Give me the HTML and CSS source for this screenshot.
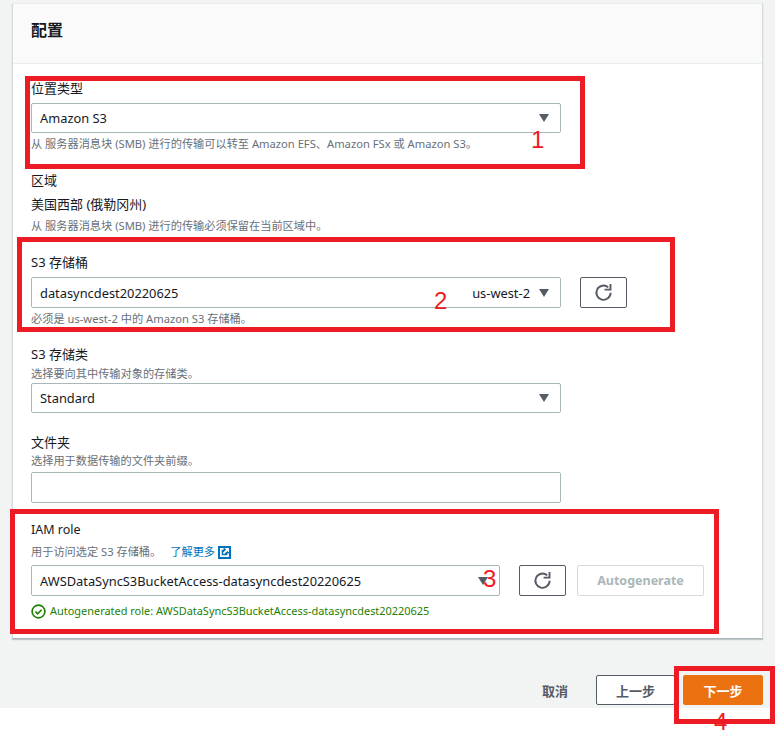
FILE: index.html
```html
<!DOCTYPE html>
<html lang="zh-CN">
<head>
<meta charset="utf-8">
<title>配置</title>
<link rel="stylesheet" href="styles.css">
</head>
<body>
<div class="page">
  <main class="wizard">
    <section class="card">
      <header class="card-header"><h2>配置</h2></header>
      <div class="card-body">
        <div class="field f-location">
          <div class="label">位置类型</div>
          <div class="select"><span class="value">Amazon S3</span><span class="caret"></span></div>
          <div class="hint">从 服务器消息块 (SMB) 进行的传输可以转至 Amazon EFS、Amazon FSx 或 Amazon S3。</div>
        </div>
        <div class="field f-region">
          <div class="label">区域</div>
          <div class="static">美国西部 (俄勒冈州)</div>
          <div class="hint">从 服务器消息块 (SMB) 进行的传输必须保留在当前区域中。</div>
        </div>
        <div class="field f-bucket">
          <div class="label">S3 存储桶</div>
          <div class="control-row">
            <div class="select"><span class="value">datasyncdest20220625</span><span class="tag">us-west-2</span><span class="caret"></span></div>
            <button class="btn icon-btn" type="button" aria-label="刷新"><svg viewBox="0 0 16 16" width="19" height="19"><path d="M14 8.2a6 6 0 1 1-2-4.5" class="ref"/><path d="M8.9 5.6h5V.8" class="ref"/></svg></button>
          </div>
          <div class="hint">必须是 us-west-2 中的 Amazon S3 存储桶。</div>
        </div>
        <div class="field f-class">
          <div class="label">S3 存储类</div>
          <div class="hint hint-top">选择要向其中传输对象的存储类。</div>
          <div class="select"><span class="value">Standard</span><span class="caret"></span></div>
        </div>
        <div class="field f-folder">
          <div class="label">文件夹</div>
          <div class="hint hint-top">选择用于数据传输的文件夹前缀。</div>
          <div class="select"></div>
        </div>
        <div class="field f-role">
          <div class="label">IAM role</div>
          <div class="hint hint-role">用于访问选定 S3 存储桶。<a class="link" href="#">了解更多<svg class="ext" viewBox="0 0 13 13" width="13" height="13"><path d="M0 0h13v13H0z" fill="#0073bb"/><path d="M2 2h3.6v1.7H3.7v5.6h5.6V7.4H11V11H2z" fill="#fff"/><path d="M6.5 2H11v4.5L9.4 4.9 6 8.2 4.8 7l3.3-3.4z" fill="#fff"/></svg></a></div>
          <div class="control-row role-row">
            <div class="select role-select"><span class="value">AWSDataSyncS3BucketAccess-datasyncdest20220625</span><span class="caret"></span></div>
            <button class="btn icon-btn" type="button" aria-label="刷新"><svg viewBox="0 0 16 16" width="19" height="19"><path d="M14 8.2a6 6 0 1 1-2-4.5" class="ref"/><path d="M8.9 5.6h5V.8" class="ref"/></svg></button>
            <button class="btn disabled" type="button">Autogenerate</button>
          </div>
          <div class="status"><svg viewBox="0 0 16 16" width="15" height="15"><circle cx="8" cy="8" r="6.8" fill="none" stroke="#1d8102" stroke-width="1.8"/><path d="M4.8 8.2l2.3 2.3 4.2-4.4" fill="none" stroke="#1d8102" stroke-width="1.8"/></svg><span>Autogenerated role: AWSDataSyncS3BucketAccess-datasyncdest20220625</span></div>
        </div>
      </div>
    </section>
    <footer class="actions">
      <a class="cancel" href="#">取消</a>
      <button class="btn prev" type="button">上一步</button>
      <button class="btn primary" type="button">下一步</button>
    </footer>
  </main>

  <div class="mark mark-1"></div>
  <div class="mark mark-2"></div>
  <div class="mark mark-3"></div>
  <div class="mark mark-4"></div>
  <span class="num num-1">1</span>
  <span class="num num-2">2</span>
  <span class="num num-3">3</span>
  <span class="num num-4">4</span>
</div>
</body>
</html>
```
FILE: styles.css
```css
* { box-sizing: border-box; }
html, body { margin: 0; padding: 0; background: #fff; }
body {
  font-family: "Noto Sans", "Noto Sans CJK SC", sans-serif;
  font-size: 13px;
  color: #16191f;
}
.page { position: relative; width: 775px; height: 754px; overflow: hidden; }
.wizard { background: #f2f3f3; height: 708px; padding: 3px 12px 0 12px; }
.card {
  background: #fff;
  height: 636px;
  border: 1px solid #d5dbdb;
  border-bottom-color: #aab7b8;
  border-top-color: #eaeded;
  box-shadow: 0 1px 1px rgba(0, 27, 36, .2);
}
.card-header {
  height: 60px;
  background: #fafafa;
  border-bottom: 1px solid #eaeded;
  padding: 15px 18px 0;
}
.card-header h2 { margin: 0; font-size: 16px; line-height: 22px; font-weight: 700; color: #16191f; }
.card-body { padding: 0 18px; }
.field { display: block; }
.label { font-size: 13px; line-height: 18px; color: #16191f; }
.hint { font-size: 11.2px; line-height: 16px; color: #687078; margin-top: 3px; }
.hint-top { margin-top: 3px; margin-bottom: 1px; }
.static { font-size: 13px; line-height: 18px; margin-top: 6px; }
.select {
  display: flex;
  align-items: center;
  width: 530px;
  height: 31px;
  padding: 0 11px 0 8px;
  background: #fff;
  border: 1px solid #aab7b8;
  border-radius: 2px;
  font-size: 12.85px;
}
.value { flex: 1; white-space: nowrap; }
.tag { margin-right: 9px; }
.caret {
  width: 0; height: 0;
  border-left: 5.5px solid transparent;
  border-right: 5.5px solid transparent;
  border-top: 8px solid #545b64;
}
.control-row { display: flex; gap: 19px; }
.btn {
  font-family: inherit;
  height: 31px;
  background: #fff;
  border: 1px solid #545b64;
  border-radius: 2px;
  color: #545b64;
  font-weight: 700;
  font-size: 13px;
  padding: 0;
  display: inline-flex;
  align-items: center;
  justify-content: center;
}
.icon-btn { width: 47px; }
.ref { fill: none; stroke: #545b64; stroke-width: 1.6; }
.f-location { padding-top: 15px; }
.f-location .select { margin-top: 6px; height: 30px; }
.f-region { margin-top: 19px; }
.f-region .hint { margin-top: 5px; }
.f-bucket { margin-top: 19px; }
.f-bucket .control-row { margin-top: 6px; }
.f-bucket .hint { margin-top: 3px; }
.f-class { margin-top: 18px; }
.f-class .select { height: 30px; }
.f-folder { margin-top: 20px; }
.f-folder .hint-top { margin-top: 2px; margin-bottom: 3px; }
.f-role { margin-top: 17px; }
.f-role .label { padding-top: 1px; font-size: 12.5px; }
.hint-role { margin-top: 5px; display: flex; align-items: center; }
.link { color: #0073bb; text-decoration: none; margin-left: 9px; display: inline-flex; align-items: center; gap: 3px; }
.role-row { margin-top: 5px; }
.role-select { width: 469px; }
.disabled { width: 127px; margin-left: -8px; border-color: #d5dbdb; color: #aab7b8; font-size: 12.5px; }
.status { display: flex; align-items: center; gap: 4px; margin-top: 7px; font-size: 10.95px; line-height: 16px; color: #1d8102; }
.actions { display: flex; justify-content: flex-end; align-items: center; margin-top: 36px; }
.cancel { color: #545b64; font-weight: 700; text-decoration: none; margin-right: 28px; font-size: 13px; }
.prev { width: 79px; height: 30px; margin-right: 8px; }
.primary { width: 80px; height: 30px; background: #ec7211; border-color: #ec7211; color: #fff; }
.mark { position: absolute; border: 5px solid #ed1c24; pointer-events: none; }
.mark-1 { left: 25px; top: 76px; width: 560px; height: 93px; }
.mark-2 { left: 17px; top: 237px; width: 658px; height: 95px; }
.mark-3 { left: 10px; top: 509px; width: 709px; height: 125px; }
.mark-4 { left: 674px; top: 666px; width: 101px; height: 58px; }
.num { position: absolute; font-family: "Liberation Sans", sans-serif; font-size: 24px; line-height: 28px; color: #ed1c24; }
.num-1 { left: 531px; top: 126px; }
.num-2 { left: 434px; top: 287px; }
.num-3 { left: 483px; top: 565px; }
.num-4 { left: 714px; top: 708px; }
```
